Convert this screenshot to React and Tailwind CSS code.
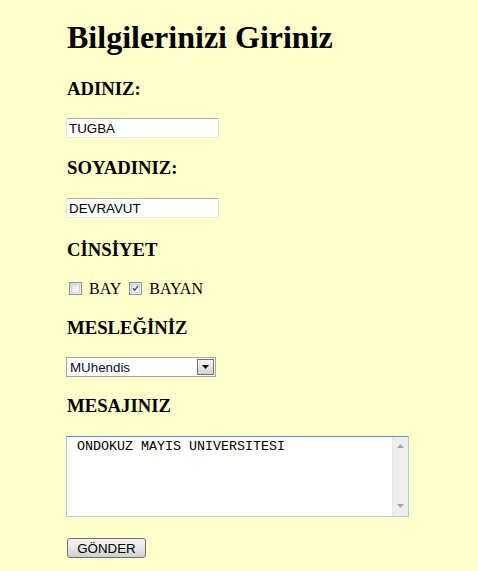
import React from "react";

const serif = { fontFamily: '"Liberation Serif", "Times New Roman", serif' };
const sans = { fontFamily: '"Liberation Sans", Arial, sans-serif' };
const mono = { fontFamily: '"Liberation Mono", "Courier New", monospace' };

function Heading({ children, mt }) {
  return (
    <h3
      className={`pl-[1px] text-[18.72px] leading-[22px] h-[22px] font-bold text-black whitespace-nowrap ${mt}`}
      style={serif}
    >
      {children}
    </h3>
  );
}

function TextBox({ value, mt }) {
  return (
    <div
      className={`${mt} w-[153px] h-[20px] border border-[#e3e9ef] border-t-[#abadb3] border-l-[#e2e3ea] border-r-[#dbdfe6] rounded-[2px] bg-white flex items-center pl-[2px] text-[13.33px] leading-[15px] text-black`}
      style={sans}
    >
      {value}
    </div>
  );
}

function Check({ checked }) {
  return (
    <span className="mt-[3px] w-[13px] h-[13px] border border-[#8e8f8f] bg-gradient-to-br from-[#dcdcdc] to-[#fbfbfb] flex items-center justify-center shrink-0">
      <span className="w-[9px] h-[9px] border border-[#d0d0d0] bg-gradient-to-br from-[#e4e4e4] to-[#f8f8f8] flex items-center justify-center">
        {checked && (
          <svg width="9" height="9" viewBox="0 0 9 9">
            <path d="M1.2 4.2 L3.5 6.8 L7.8 1" fill="none" stroke="#34498f" strokeWidth="1.7" />
          </svg>
        )}
      </span>
    </span>
  );
}

export default function App() {
  return (
    <div className="min-h-[571px] bg-[#ffffcc] pl-[66px] pt-[19px] flex flex-col items-start">
      <h1
        className="pl-[1px] text-[32px] leading-[37px] h-[37px] font-bold text-black whitespace-nowrap"
        style={serif}
      >
        Bilgilerinizi Giriniz
      </h1>

      <Heading mt="mt-[22px]">ADINIZ:</Heading>
      <TextBox value="TUGBA" mt="mt-[18px]" />

      <Heading mt="mt-[19px]">SOYADINIZ:</Heading>
      <TextBox value="DEVRAVUT" mt="mt-[19px]" />

      <Heading mt="mt-[21px]">CİNSİYET</Heading>
      <div
        className="mt-[18px] h-[20px] flex items-start pl-[3px] text-[16px] leading-[20px] text-black"
        style={serif}
      >
        <Check />
        <span className="ml-[7px]">BAY</span>
        <span className="ml-[8px] flex">
          <Check checked />
        </span>
        <span className="ml-[7px]">BAYAN</span>
      </div>

      <Heading mt="mt-[18px]">MESLEĞİNİZ</Heading>
      <div
        className="mt-[18px] w-[150px] h-[20px] border border-[#a5a5a5] bg-white flex items-center text-[13.33px] leading-[15px] text-[#0a0a3a]"
        style={sans}
      >
        <span className="pl-[3px] flex-1">MUhendis</span>
        <span className="mr-[1px] w-[17px] h-[16px] border border-[#707070] bg-gradient-to-b from-[#f6f6f6] to-[#d4d4d4] flex items-center justify-center">
          <svg width="7" height="4" viewBox="0 0 7 4">
            <path d="M0 0 H7 L3.5 4 Z" fill="#000" />
          </svg>
        </span>
      </div>

      <Heading mt="mt-[18px]">MESAJINIZ</Heading>
      <div className="mt-[19px] w-[343px] h-[81px] border border-[#a8cbe6] border-t-[#5c91c2] bg-white flex">
        <textarea
          readOnly
          className="flex-1 resize-none outline-none border-0 p-[2px] text-[13.33px] leading-[15px] text-black bg-white overflow-hidden"
          style={mono}
          defaultValue=" ONDOKUZ MAYIS UNIVERSITESI"
        />
        <div className="w-[16px] bg-[#eeeeee] border-l border-[#e4e4e4] flex flex-col items-center justify-between pt-[7px] pb-[8px]">
          <svg width="7" height="4" viewBox="0 0 7 4">
            <path d="M3.5 0 L7 4 H0 Z" fill="#a3a3a3" />
          </svg>
          <svg width="7" height="4" viewBox="0 0 7 4">
            <path d="M0 0 H7 L3.5 4 Z" fill="#a3a3a3" />
          </svg>
        </div>
      </div>

      <button
        className="mt-[21px] ml-[1px] w-[79px] h-[20px] border border-[#707070] rounded-[3px] bg-gradient-to-b from-[#f4f4f4] via-[#e6e6e6] to-[#cfcfcf] text-[13.33px] leading-[15px] text-black flex items-center justify-center"
        style={sans}
      >
        GÖNDER
      </button>
    </div>
  );
}
